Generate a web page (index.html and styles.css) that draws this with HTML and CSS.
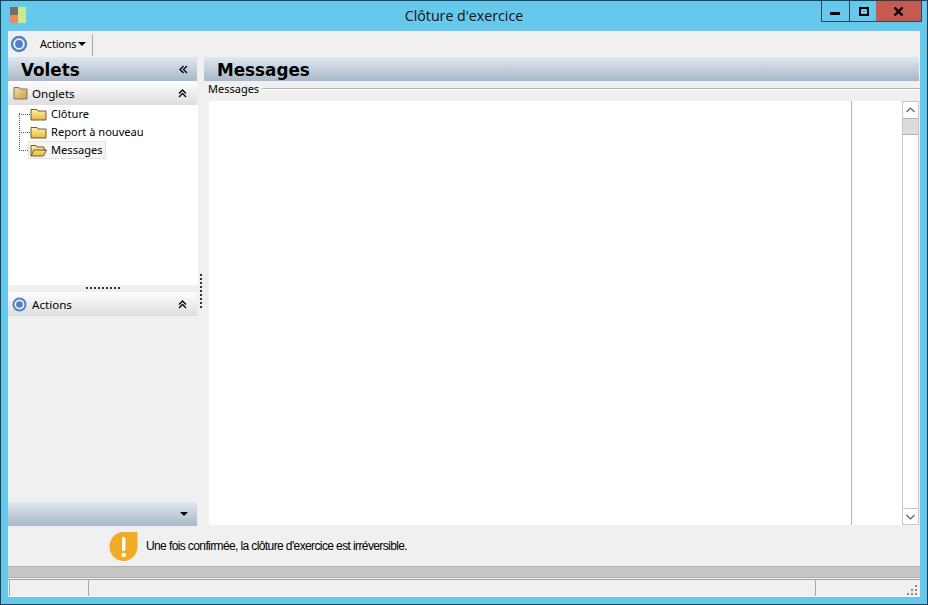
FILE: index.html
```html
<!DOCTYPE html>
<html lang="fr">
<head>
<meta charset="utf-8">
<title>Clôture d'exercice</title>
<link rel="stylesheet" href="styles.css">
</head>
<body>
<svg class="defs" width="0" height="0">
  <defs>
    <linearGradient id="fold" x1="0" y1="0" x2="0" y2="1"><stop offset="0" stop-color="#fff0b0"/><stop offset="1" stop-color="#eab93c"/></linearGradient>
    <linearGradient id="foldbig" x1="0" y1="0" x2="1" y2="1"><stop offset="0" stop-color="#f4e0a8"/><stop offset="1" stop-color="#c99a45"/></linearGradient>
  </defs>
</svg>
<div class="window">
  <header class="titlebar">
    <svg class="app-icon" width="17" height="16" viewBox="0 0 17 16"><rect x="0" y="0" width="8" height="8" fill="#6f6f6f"/><rect x="0" y="8" width="8" height="8" fill="#f08a5d"/><rect x="8" y="0" width="8" height="16" fill="#c5ec8f"/></svg>
    <div class="title">Clôture d'exercice</div>
    <div class="caption">
      <div class="cap cap-min"><svg width="11" height="4" viewBox="0 0 11 4"><rect width="10" height="3" y="1" fill="#000"/></svg></div>
      <div class="cap cap-max"><svg width="11" height="9" viewBox="0 0 11 9"><rect x="1" y="1" width="8" height="7" fill="none" stroke="#000" stroke-width="2"/></svg></div>
      <div class="cap cap-close"><svg width="11" height="9" viewBox="0 0 11 9"><path d="M1.5 0.5 L9.5 8.5 M9.5 0.5 L1.5 8.5" stroke="#000" stroke-width="2.4" fill="none"/></svg></div>
    </div>
  </header>
  <div class="client">
    <div class="toolbar">
      <svg class="radio" width="18" height="18" viewBox="0 0 18 18"><circle cx="9" cy="9" r="7" fill="#eef1f6" stroke="#5083c6" stroke-width="2.4"/><circle cx="9" cy="9" r="3.9" fill="#4f7fc4"/></svg>
      <div class="tool-btn">Actions<span class="caret"></span></div>
      <div class="tool-sep"></div>
    </div>
    <div class="workspace">
      <aside class="sidebar">
        <div class="band band-volets"><span class="band-title">Volets</span>
          <svg class="chev" width="9" height="9" viewBox="0 0 9 9"><path d="M4.5 1 L1 4.5 L4.5 8 M8 1 L4.5 4.5 L8 8" fill="none" stroke="#000" stroke-width="1.3"/></svg>
        </div>
        <div class="section-head">
          <svg class="folder-big" width="15" height="14" viewBox="0 0 15 14"><path d="M1 1.5 H6 L7 3 H14 V13 H1 Z" fill="url(#foldbig)" stroke="#85744f"/></svg>
          <span>Onglets</span>
          <svg class="chev chev-up" width="9" height="9" viewBox="0 0 9 9"><path d="M1 4.5 L4.5 1 L8 4.5 M1 8 L4.5 4.5 L8 8" fill="none" stroke="#000" stroke-width="1.3"/></svg>
        </div>
        <div class="tree">
          <div class="tree-line"></div>
          <div class="node"><span class="tick"></span><svg width="17" height="13" viewBox="0 0 17 13"><path d="M1 1.5 H7 L8 3 H16 V12 H1 Z" fill="url(#fold)" stroke="#6d5d30"/></svg><span class="node-label">Clôture</span></div>
          <div class="node"><span class="tick"></span><svg width="17" height="13" viewBox="0 0 17 13"><path d="M1 1.5 H7 L8 3 H16 V12 H1 Z" fill="url(#fold)" stroke="#6d5d30"/></svg><span class="node-label">Report à nouveau</span></div>
          <div class="node"><span class="tick"></span><div class="selected"><svg width="17" height="13" viewBox="0 0 17 13"><path d="M1 1.5 H6 L7 3 H14 V6 H16.5 L13.5 12 H1 Z" fill="url(#fold)" stroke="#6d5d30"/><path d="M1 12 L4 6 H16" fill="none" stroke="#6d5d30"/></svg><span class="node-label">Messages</span></div></div>
        </div>
        <div class="grip"><div class="grip-dots"></div></div>
        <div class="section-head section-actions">
          <svg class="radio-small" width="15" height="15" viewBox="0 0 15 15"><circle cx="7.5" cy="7.5" r="6" fill="#eef1f6" stroke="#5083c6" stroke-width="2"/><circle cx="7.5" cy="7.5" r="3.3" fill="#4f7fc4"/></svg>
          <span>Actions</span>
          <svg class="chev chev-up" width="9" height="9" viewBox="0 0 9 9"><path d="M1 4.5 L4.5 1 L8 4.5 M1 8 L4.5 4.5 L8 8" fill="none" stroke="#000" stroke-width="1.3"/></svg>
        </div>
        <div class="side-fill"></div>
        <div class="band band-bottom"><span class="caret caret-bottom"></span></div>
      </aside>
      <div class="splitter"><div class="splitter-dots"></div></div>
      <main class="main">
        <div class="band band-main"><span class="band-title">Messages</span></div>
        <div class="group-head"><span class="group-label">Messages</span><span class="group-line"></span></div>
        <div class="panel">
          <div class="grid-area"><div class="col-wide"></div><div class="col-rest"></div></div>
          <div class="scrollbar">
            <div class="sb-btn"><svg width="9" height="6" viewBox="0 0 9 6"><path d="M0.5 5 L4.5 1 L8.5 5" fill="none" stroke="#606060" stroke-width="1.2"/></svg></div>
            <div class="sb-thumb"></div>
            <div class="sb-track"></div>
            <div class="sb-btn sb-btn-down"><svg width="9" height="6" viewBox="0 0 9 6"><path d="M0.5 1 L4.5 5 L8.5 1" fill="none" stroke="#606060" stroke-width="1.2"/></svg></div>
          </div>
        </div>
      </main>
    </div>
    <div class="notice">
      <svg class="warn" width="29" height="30" viewBox="0 0 29 30"><path d="M14.5 1 H28.5 V15 A14 14.5 0 1 1 14.5 1 Z" fill="#f0ac26"/><rect x="13" y="6" width="3.4" height="14" rx="1.5" fill="#fff"/><circle cx="14.7" cy="24" r="2.2" fill="#fff"/></svg>
      <span class="notice-text">Une fois confirmée, la clôture d'exercice est irréversible.</span>
    </div>
    <div class="progress"></div>
    <div class="statusbar">
      <div class="st st-1"></div>
      <div class="st st-2"></div>
      <div class="st st-3">
        <svg width="12" height="12" viewBox="0 0 12 12" fill="#8a8a8a"><rect x="9" y="1" width="2" height="2"/><rect x="5" y="5" width="2" height="2"/><rect x="9" y="5" width="2" height="2"/><rect x="1" y="9" width="2" height="2"/><rect x="5" y="9" width="2" height="2"/><rect x="9" y="9" width="2" height="2"/></svg>
      </div>
    </div>
  </div>
</div>
</body>
</html>
```
FILE: styles.css
```css
* { box-sizing: border-box; }
html, body { margin: 0; padding: 0; }
body { width: 928px; height: 605px; overflow: hidden; font-family: "Noto Sans", "Open Sans", sans-serif; font-size: 12px; color: #000; }
.defs { position: absolute; }
.window { width: 928px; height: 605px; border: 1px solid #1f4154; background: #66c9ec; padding: 0 7px 7px 7px; display: flex; flex-direction: column; }
.titlebar { height: 30px; flex: none; position: relative; display: flex; align-items: flex-start; }
.app-icon { margin: 6px 0 0 2px; }
.title { position: absolute; left: 0; right: 0; top: 5px; text-align: center; font-size: 14.2px; line-height: 20px; font-family: "Open Sans", "Noto Sans", sans-serif; color: #111; }
.caption { position: absolute; right: -2px; top: 0; display: flex; height: 21px; border: 1px solid #26485c; border-top: 0; }
.cap { display: flex; align-items: center; justify-content: center; height: 20px; }
.cap-min { width: 28px; border-right: 1px solid #26485c; padding-top: 4px; }
.cap-max { width: 26px; padding-left: 2px; }
.cap-close { width: 45px; background: #c75a50; }
.client { flex: 1; background: #f0f0f0; display: flex; flex-direction: column; min-height: 0; }
.toolbar { height: 25px; flex: none; display: flex; align-items: center; padding-left: 2px; }
.radio { margin-right: 12px; }
.tool-btn { font-size: 10.8px; display: flex; align-items: center; margin-right: 6px; letter-spacing: -0.1px; }
.caret { display: inline-block; width: 0; height: 0; border-left: 4px solid transparent; border-right: 4px solid transparent; border-top: 4px solid #000; margin-left: 2px; }
.tool-sep { width: 1px; height: 22px; background: #a8a8a8; margin-top: 2px; }
.workspace { flex: 1; display: flex; min-height: 0; }
.sidebar { width: 190px; flex: none; display: flex; flex-direction: column; margin-top: 1px; margin-bottom: -1px; }
.band { height: 24px; flex: none; background: linear-gradient(#dfe8f2, #a9b7c6); display: flex; align-items: center; justify-content: space-between; }
.band-title { font-family: "DejaVu Sans", sans-serif; font-weight: bold; font-size: 16.8px; line-height: 24px; padding-left: 13px; padding-top: 1px; }
.band-volets { padding-right: 9px; margin-right: 1px; }
.section-head { height: 24px; flex: none; background: linear-gradient(#fdfdfd, #dedede); display: flex; align-items: center; padding: 0 10px 0 5px; margin-right: 1px; }
.section-head span { margin-left: 4px; font-size: 11.6px; }
.section-head .chev-up { margin-left: auto; }
.tree { height: 180px; flex: none; background: #fff; position: relative; }
.tree-line { position: absolute; left: 11px; top: 8px; height: 36px; border-left: 1px dotted #555; }
.node { height: 18px; display: flex; align-items: center; padding-left: 11px; }
.tick { width: 11px; border-top: 1px dotted #555; flex: none; }
.node svg { flex: none; }
.node-label { margin-left: 4px; font-size: 11.1px; line-height: 16px; }
.selected { display: flex; align-items: center; height: 18px; margin-left: -2px; padding: 0 2px 0 1px; background: #f5f5f5; border: 1px solid #e2e2e2; }
.grip { height: 7px; flex: none; background: #f0f0f0; display: flex; justify-content: center; align-items: center; }
.grip-dots { width: 36px; height: 2px; margin-top: -2px; margin-left: 2px; background: repeating-linear-gradient(90deg, #333 0 2px, transparent 2px 4px); }
.section-actions { padding-left: 4px; }
.section-actions span { margin-left: 5px; }
.side-fill { flex: 1; background: #f0f0f0; }
.band-bottom { margin-right: 1px; justify-content: flex-end; padding-right: 9px; }
.caret-bottom { margin: 0; }
.splitter { width: 6px; flex: none; position: relative; background: #f0f0f0; }
.splitter-dots { position: absolute; left: 2px; top: 218px; width: 2px; height: 34px; background: repeating-linear-gradient(#333 0 2px, transparent 2px 4px); }
.main { flex: 1; display: flex; flex-direction: column; min-width: 0; margin-top: 1px; }
.band-main { margin-right: 1px; }
.group-head { height: 20px; flex: none; display: flex; align-items: center; padding: 0 0 4px 4px; }
.group-label { font-size: 11px; line-height: 14px; }
.group-line { flex: 1; height: 2px; margin-left: 3px; background: #b5b5b5; border-bottom: 1px solid #fff; }
.panel { flex: 1; display: flex; min-height: 0; margin-left: 5px; padding-right: 1px; }
.grid-area { flex: 1; display: flex; background: #fff; }
.col-wide { width: 643px; border-right: 1px solid #b8b8b8; }
.col-rest { flex: 1; }
.scrollbar { width: 17px; flex: none; background: #fff; border: 1px solid #c8c8c8; display: flex; flex-direction: column; }
.sb-btn { height: 16px; flex: none; display: flex; align-items: center; justify-content: center; }
.sb-btn-down { border-top: 1px solid #c8c8c8; }
.sb-thumb { height: 17px; flex: none; background: #dcdcdc; border: 1px solid #b0b0b0; border-width: 1px 0; }
.sb-track { flex: 1; }
.notice { height: 41px; flex: none; display: flex; align-items: center; padding-left: 101px; }
.notice-text { margin-left: 8px; font-family: "Liberation Sans", sans-serif; font-size: 12px; letter-spacing: -0.61px; margin-top: 1px; }
.progress { height: 12px; flex: none; background: #c6c6c6; border: 1px solid #b0b0b0; border-width: 1px 0; }
.statusbar { height: 18px; flex: none; display: flex; border-top: 1px solid #a0a0a0; border-bottom: 1px solid #fff; margin-top: 1px; padding-left: 1px; }
.st { border-left: 1px solid #a8a8a8; height: 16px; }
.st-1 { width: 79px; }
.st-2 { width: 727px; }
.st-3 { flex: 1; display: flex; justify-content: flex-end; align-items: flex-end; padding: 0 2px 0 0; }
```
